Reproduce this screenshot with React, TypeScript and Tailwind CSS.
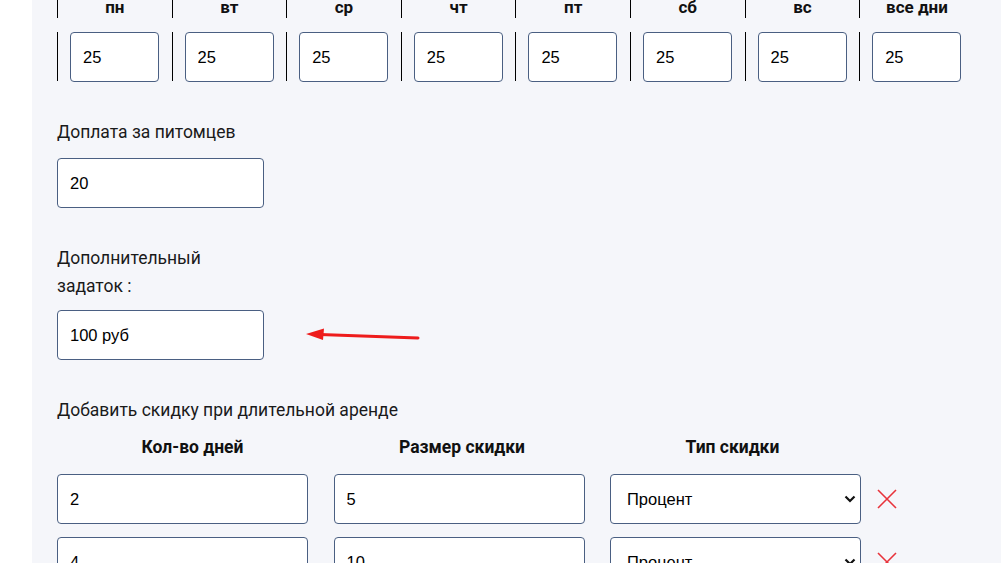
import { useState } from 'react'

const days = ['пн', 'вт', 'ср', 'чт', 'пт', 'сб', 'вс', 'все дни']

const labelCls = "font-['Roboto',sans-serif] text-[17.5px] leading-[28px] text-[#1a1a1a]"
const headCls = "text-center font-['Roboto',sans-serif] text-[17.5px] font-bold leading-[28px] text-[#111]"
const fieldCls =
  "h-[50px] rounded-[4px] border border-[#4a5f82] bg-white px-[12px] font-['Liberation_Sans',Arial,sans-serif] text-[16.5px] text-black outline-none"

function DeleteIcon() {
  return (
    <svg width="22" height="22" viewBox="0 0 22 22" className="shrink-0">
      <path d="M2 2 L20 20 M20 2 L2 20" stroke="#e8333b" strokeWidth="1.6" fill="none" />
    </svg>
  )
}

function TypeSelect({ value }: { value: string }) {
  return (
    <div className="relative w-[251px]">
      <select
        defaultValue={value}
        className={`${fieldCls} w-full appearance-none pl-[16px]`}
      >
        <option>Процент</option>
        <option>Рубли</option>
      </select>
      <svg
        width="12"
        height="8"
        viewBox="0 0 12 8"
        className="pointer-events-none absolute right-[5px] top-[21px]"
      >
        <path d="M1.5 1.5 L6 6 L10.5 1.5" stroke="#111" strokeWidth="2.2" fill="none" />
      </svg>
    </div>
  )
}

export default function App() {
  const [discounts] = useState([
    { days: '2', size: '5', type: 'Процент' },
    { days: '4', size: '10', type: 'Процент' },
  ])

  return (
    <div className="flex min-h-screen bg-white">
      <div className="w-[32px] shrink-0 bg-white" />
      <main className="relative flex-1 bg-[#f5f6fa] pl-[25px] pb-10">
        <div className="grid w-[918px] grid-cols-[repeat(8,114.6px)] gap-y-[14px]">
          {days.map((d) => (
            <div
              key={d}
              className="h-[18px] border-l border-black text-center font-['Roboto',sans-serif] text-[17px] font-bold leading-[15px] text-[#111]"
            >
              {d}
            </div>
          ))}
          {days.map((d) => (
            <div key={d + '-v'} className="h-[49px] border-l border-black pl-[12px]">
              <input defaultValue="25" className={`${fieldCls} h-[49px] w-[89px]`} />
            </div>
          ))}
        </div>

        <div className="mt-[37px] w-[207px]">
          <div className={labelCls}>Доплата за питомцев</div>
          <input defaultValue="20" className={`${fieldCls} mt-[12px] w-[207px]`} />
        </div>

        <div className="mt-[36px] w-[207px]">
          <div className={labelCls}>Дополнительный задаток :</div>
          <input defaultValue="100 руб" className={`${fieldCls} mt-[10px] w-[207px]`} />
        </div>

        <div className={`${labelCls} mt-[36px]`}>Добавить скидку при длительной аренде</div>

        <div className="mt-[9px] grid grid-cols-[251px_251px_251px_auto] items-center gap-x-[25.5px] gap-y-[13px]">
          <div className={`${headCls} pl-[20px]`}>Кол-во дней</div>
          <div className={`${headCls} pl-[6px]`}>Размер скидки</div>
          <div className={`${headCls} pr-[6px]`}>Тип скидки</div>
          <div />
          {discounts.map((r, i) => (
            <div key={i} className="contents">
              <input defaultValue={r.days} className={`${fieldCls} w-[251px]`} />
              <input defaultValue={r.size} className={`${fieldCls} w-[251px]`} />
              <TypeSelect value={r.type} />
              <div className="-ml-[11px]">
                <DeleteIcon />
              </div>
            </div>
          ))}
        </div>

        <svg
          width="130"
          height="20"
          viewBox="0 0 130 20"
          className="pointer-events-none absolute left-[270px] top-[326px]"
        >
          <path d="M116 12 L18 8.5" stroke="#ee1c1c" strokeWidth="3" strokeLinecap="round" />
          <path d="M4 8 L22 2.5 L21 14 Z" fill="#ee1c1c" />
        </svg>
      </main>
    </div>
  )
}
